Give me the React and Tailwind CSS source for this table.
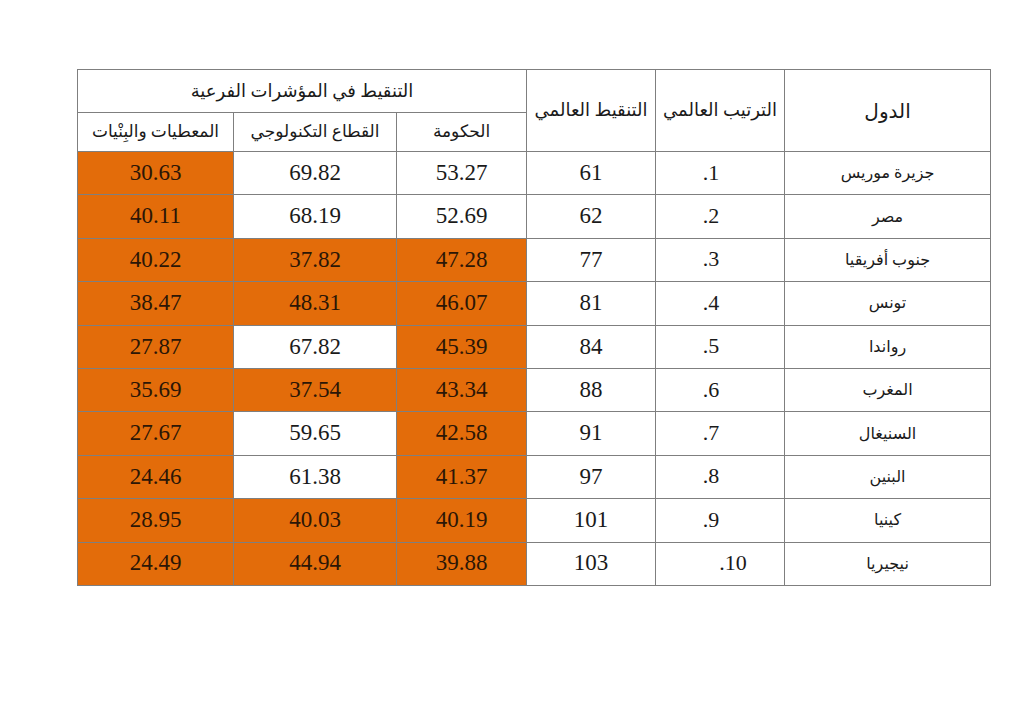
import React from 'react';

const ORANGE = 'bg-[#e36c0a]';

const rows = [
  { name: 'جزيرة موريس', rank: '.1', score: 61, gov: ['53.27', 0], tech: ['69.82', 0], data: ['30.63', 1] },
  { name: 'مصر', rank: '.2', score: 62, gov: ['52.69', 0], tech: ['68.19', 0], data: ['40.11', 1] },
  { name: 'جنوب أفريقيا', rank: '.3', score: 77, gov: ['47.28', 1], tech: ['37.82', 1], data: ['40.22', 1] },
  { name: 'تونس', rank: '.4', score: 81, gov: ['46.07', 1], tech: ['48.31', 1], data: ['38.47', 1] },
  { name: 'رواندا', rank: '.5', score: 84, gov: ['45.39', 1], tech: ['67.82', 0], data: ['27.87', 1] },
  { name: 'المغرب', rank: '.6', score: 88, gov: ['43.34', 1], tech: ['37.54', 1], data: ['35.69', 1] },
  { name: 'السنيغال', rank: '.7', score: 91, gov: ['42.58', 1], tech: ['59.65', 0], data: ['27.67', 1] },
  { name: 'البنين', rank: '.8', score: 97, gov: ['41.37', 1], tech: ['61.38', 0], data: ['24.46', 1] },
  { name: 'كينيا', rank: '.9', score: 101, gov: ['40.19', 1], tech: ['40.03', 1], data: ['28.95', 1] },
  { name: 'نيجيريا', rank: '.10', score: 103, gov: ['39.88', 1], tech: ['44.94', 1], data: ['24.49', 1] },
];

const cell = 'border border-[#7f7f7f] text-center align-middle p-0';

const ValueCell = ({ v }) => (
  <td className={`${cell} text-[23px] ${v[1] ? `${ORANGE} text-[#2b1606]` : 'bg-white text-[#1a1a1a]'}`}>
    {v[0]}
  </td>
);

export default function App() {
  return (
    <div
      className="min-h-[724px] w-[1024px] bg-white pt-[69px] pl-[77px]"
      style={{ fontFamily: '"Liberation Serif", "DejaVu Sans", serif' }}
    >
      <table dir="rtl" className="table-fixed border-collapse w-[913px] text-[#1a1a1a]">
        <colgroup>
          <col className="w-[206px]" />
          <col className="w-[129px]" />
          <col className="w-[129px]" />
          <col className="w-[130px]" />
          <col className="w-[163px]" />
          <col className="w-[156px]" />
        </colgroup>
        <thead>
          <tr className="h-[43px]">
            <th rowSpan={2} className={`${cell} font-normal text-[20px]`}>الدول</th>
            <th rowSpan={2} className={`${cell} font-normal text-[18px]`}>الترتيب العالمي</th>
            <th rowSpan={2} className={`${cell} font-normal text-[18px]`}>التنقيط العالمي</th>
            <th colSpan={3} className={`${cell} font-normal text-[18px]`}>التنقيط في المؤشرات الفرعية</th>
          </tr>
          <tr className="h-[39px]">
            <th className={`${cell} font-normal text-[17px]`}>الحكومة</th>
            <th className={`${cell} font-normal text-[17px]`}>القطاع التكنولوجي</th>
            <th className={`${cell} font-normal text-[17px]`}>المعطيات والبِنْيات</th>
          </tr>
        </thead>
        <tbody>
          {rows.map((r) => (
            <tr key={r.rank} className="h-[43.4px]">
              <td className={`${cell} text-[16px]`}>{r.name}</td>
              <td className={`${cell} text-[22px] ${r.rank === '.10' ? 'pl-[26px]' : 'pr-[18px]'}`}>
                <span dir="ltr" className="relative -top-[1px]">{r.rank}</span>
              </td>
              <td className={`${cell} text-[23px]`}>{r.score}</td>
              <ValueCell v={r.gov} />
              <ValueCell v={r.tech} />
              <ValueCell v={r.data} />
            </tr>
          ))}
        </tbody>
      </table>
    </div>
  );
}
